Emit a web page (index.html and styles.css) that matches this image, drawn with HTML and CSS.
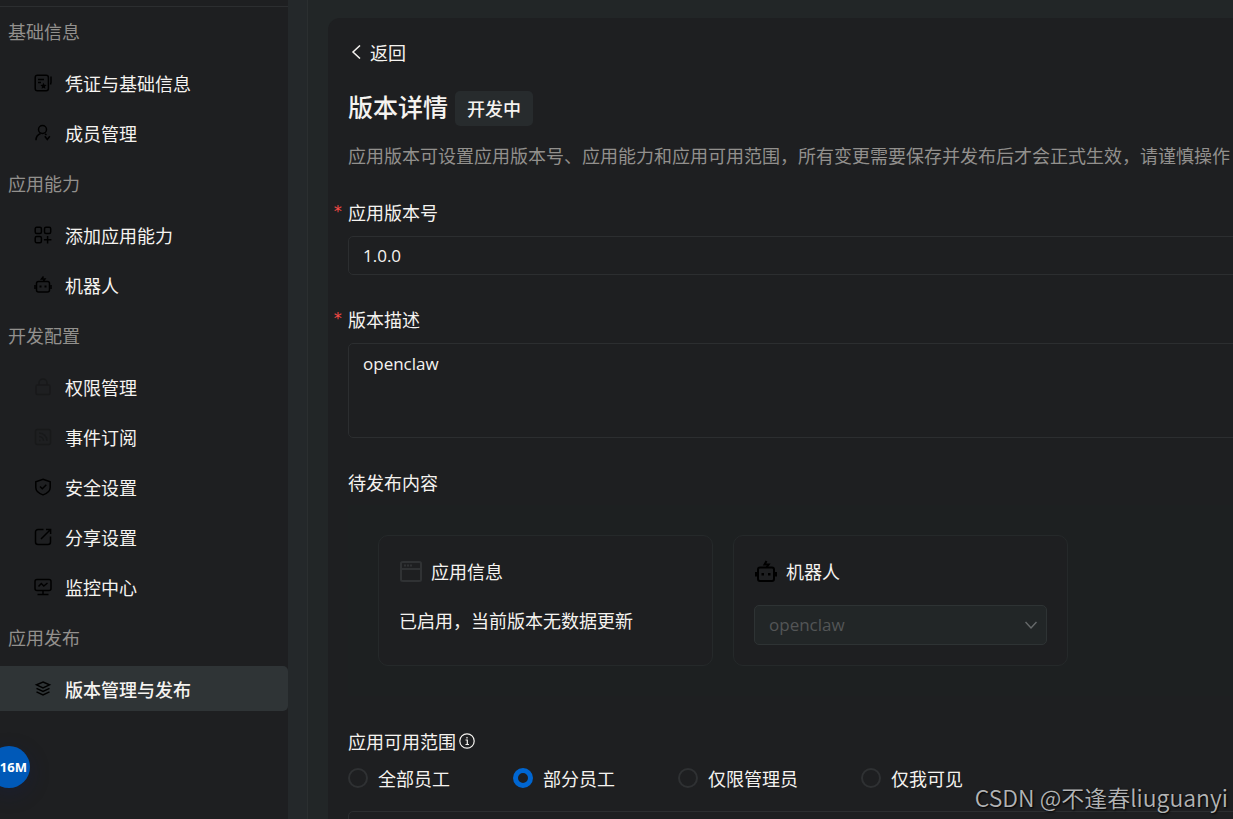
FILE: index.html
```html
<!DOCTYPE html>
<html lang="zh-CN">
<head>
    <meta charset="UTF-8">
    <meta name="viewport" content="width=device-width, initial-scale=1.0">
    <title>版本详情</title>
    <link rel="stylesheet" href="styles.css">
</head>
<body>
    <div class="layout">
        <nav class="sidebar">
            <h2 class="nav-title">基础信息</h2>
            <ul class="nav-list">
                <li><a class="nav-item" href="#">
                    <svg class="nav-icon" viewBox="0 0 18 18"><rect x="1.2" y="1.2" width="13.2" height="15.6" rx="2.2"/><path d="M4 5.500h6M4 8.500h3M17 2.500v6l-.5 2"/><path class="solid" d="M9.500 8.800l.9 2 2.200.3-1.600 1.500.4 2.200-1.900-1.100-1.900 1.100.4-2.200-1.600-1.500 2.200-.3z"/></svg>
                    凭证与基础信息
                </a></li>
                <li><a class="nav-item" href="#">
                    <svg class="nav-icon" viewBox="0 0 18 18"><circle cx="8.5" cy="5.5" r="4"/><path d="M2 16.2c0-3.4 1.8-5.700 4.600-6.700M11 9.800l1.500 1M10.800 12.300l2.500 3.200 2.500-3.200"/></svg>
                    成员管理
                </a></li>
            </ul>
            <h2 class="nav-title">应用能力</h2>
            <ul class="nav-list">
                <li><a class="nav-item" href="#">
                    <svg class="nav-icon" viewBox="0 0 18 18"><rect x="1.2" y="1.2" width="6.2" height="6.2" rx="1.5"/><rect x="10.5" y="1.2" width="6.2" height="6.2" rx="1.5"/><rect x="1.2" y="10.5" width="6.2" height="6.2" rx="1.5"/><path d="M13.6 10v7.5M9.9 13.700h7.500"/></svg>
                    添加应用能力
                </a></li>
                <li><a class="nav-item" href="#">
                    <svg class="nav-icon" viewBox="0 0 18 18"><rect x="2.5" y="5.5" width="13" height="10.5" rx="2"/><path d="M1 9v4M17 9v4M9.500 .5L7.500 3h3.500L9.500 5.200"/><path class="solid" d="M5.500 9.500h2v2h-2zM10.500 9.500h2v2h-2z"/></svg>
                    机器人
                </a></li>
            </ul>
            <h2 class="nav-title">开发配置</h2>
            <ul class="nav-list">
                <li><a class="nav-item" href="#">
                    <svg class="nav-icon dim" viewBox="0 0 18 18"><rect x="2" y="7" width="14" height="9.5" rx="1.5"/><path d="M5 7V5a4 4 0 0 1 8 0v2"/></svg>
                    权限管理
                </a></li>
                <li><a class="nav-item" href="#">
                    <svg class="nav-icon dim" viewBox="0 0 18 18"><rect x="1.5" y="1.5" width="15" height="15" rx="2"/><path d="M5 5a8 8 0 0 1 8 8M5 8.500a4.500 4.500 0 0 1 4.500 4.500M5 12.500h1.500"/></svg>
                    事件订阅
                </a></li>
                <li><a class="nav-item" href="#">
                    <svg class="nav-icon" viewBox="0 0 18 18"><path d="M9 1.300l7.200 2.500v5.700c0 3.400-3 5.900-7.200 7.400-4.200-1.500-7.200-4-7.200-7.400V3.800z"/><path d="M6 8.500l2.300 2.300 4-4"/></svg>
                    安全设置
                </a></li>
                <li><a class="nav-item" href="#">
                    <svg class="nav-icon" viewBox="0 0 18 18"><path d="M9.500 1.500H4A2.500 2.500 0 0 0 1.500 4v10A2.500 2.500 0 0 0 4 16.500h10a2.500 2.500 0 0 0 2.500-2.500V8.500M7 11l9.300-9.300M12 1.500h4.600v4.600"/></svg>
                    分享设置
                </a></li>
                <li><a class="nav-item" href="#">
                    <svg class="nav-icon" viewBox="0 0 18 18"><rect x="1" y="1.5" width="16" height="11" rx="2"/><path d="M4.500 8.500l2.800-3 2.500 2.500L13.500 5M9 12.500v4M3.500 16.500h11"/></svg>
                    监控中心
                </a></li>
            </ul>
            <h2 class="nav-title">应用发布</h2>
            <ul class="nav-list">
                <li><a class="nav-item active" href="#">
                    <svg class="nav-icon" viewBox="0 0 18 18"><path d="M9 2l6.500 2.800L9 8 2.500 4.800zM2.500 8.300L9 11.500l6.500-3.200M2.500 11.800L9 15l6.500-3.200"/></svg>
                    版本管理与发布
                </a></li>
            </ul>
        </nav>

        <div class="gutter"></div>

        <main class="content">
            <form class="panel">
                <a class="back" href="#">
                    <svg class="back-icon" viewBox="0 0 14 14"><path d="M12 0.500L5 7l7 6.500"/></svg>
                    返回
                </a>
                <div class="heading">
                    <h1>版本详情</h1>
                    <span class="tag">开发中</span>
                </div>
                <p class="intro">应用版本可设置应用版本号、应用能力和应用可用范围，所有变更需要保存并发布后才会正式生效，请谨慎操作</p>

                <div class="field">
                    <label class="required" for="version">应用版本号</label>
                    <input type="text" id="version" class="control" value="1.0.0" required>
                </div>
                <div class="field">
                    <label class="required" for="description">版本描述</label>
                    <textarea id="description" class="control" required>openclaw</textarea>
                </div>

                <h3>待发布内容</h3>
                <div class="cards">
                    <section class="card">
                        <div class="card-title">
                            <svg class="card-icon muted" viewBox="0 0 24 24"><rect x="2" y="3" width="20" height="19" rx="1.5"/><path d="M2 10h20M5 6.500h2M8 6.500h2M11 6.500h2"/></svg>
                            应用信息
                        </div>
                        <p class="card-text">已启用，当前版本无数据更新</p>
                    </section>
                    <section class="card">
                        <label class="card-title" for="robot">
                            <svg class="card-icon" viewBox="0 0 24 24"><rect x="4" y="8.500" width="16" height="13.500" rx="2"/><path d="M2 13v4.500M22 13v4.500M12.500 2L10.500 5.500h4.200L12.500 8.500"/><path class="solid" d="M7.500 14h2.500v2.500H7.500zM14 14h2.500v2.500H14z"/></svg>
                            机器人
                        </label>
                        <div class="select-wrap">
                            <select id="robot" class="control" disabled>
                                <option>openclaw</option>
                            </select>
                            <svg class="select-arrow" viewBox="0 0 12 12"><path d="M0.500 3l5.500 6 5.500-6"/></svg>
                        </div>
                    </section>
                </div>

                <fieldset class="scope">
                    <legend>
                        应用可用范围
                        <svg class="info-icon" viewBox="0 0 16 16"><circle cx="8" cy="8" r="7.2"/><path d="M6.500 7h1.800v4.500M6.500 11.500h3.500M8 4v1.500"/></svg>
                    </legend>
                    <div class="radios">
                        <label class="radio"><input type="radio" name="scope">全部员工</label>
                        <label class="radio"><input type="radio" name="scope" checked>部分员工</label>
                        <label class="radio"><input type="radio" name="scope">仅限管理员</label>
                        <label class="radio"><input type="radio" name="scope">仅我可见</label>
                    </div>
                </fieldset>
                <div class="members"></div>
            </form>
        </main>
    </div>

    <button type="button" class="memory-ball">16M</button>
    <div class="watermark">CSDN @不逢春liuguanyi</div>
</body>
</html>
```
FILE: styles.css
```css
:root {
    --bg: #222627;
    --surface: #1e1f21;
    --line: #2c2e30;
    --text: #f5f3f0;
    --muted: #92908d;
    --primary: #0066d1;
}

* {
    box-sizing: border-box;
}

body {
    margin: 0;
    height: 100vh;
    overflow: hidden;
    position: relative;
    background: var(--bg);
    color: var(--text);
    font-family: "Noto Sans CJK SC", sans-serif;
    font-size: 18px;
    line-height: 24px;
}

h1, h2, h3, p, ul, fieldset, legend {
    margin: 0;
    padding: 0;
    font-weight: 400;
    font-size: 18px;
}

a {
    color: inherit;
    text-decoration: none;
}

svg {
    flex: none;
    fill: none;
    stroke: currentColor;
    stroke-width: 1.5px;
}

.solid {
    fill: currentColor;
    stroke: none;
}

.layout {
    display: flex;
    height: 100%;
    padding-top: 6px;
    background: linear-gradient(var(--surface), var(--surface)) 0 0 / 288px 6px no-repeat;
}

.sidebar {
    flex: none;
    width: 288px;
    border-top: 1px solid var(--line);
    background: var(--surface);
}

.nav-title {
    padding-left: 8px;
    line-height: 48px;
    color: var(--muted);
}

.nav-list {
    display: grid;
    gap: 5px;
    margin: 5px 0 4px;
    list-style: none;
}

.nav-item {
    display: flex;
    align-items: center;
    gap: 13px;
    height: 45px;
    padding-left: 34px;
    border-radius: 0 5px 5px 0;
}

.nav-item.active {
    background: #2f3436;
    font-weight: 500;
}

.nav-icon {
    width: 18px;
    height: 18px;
    color: #000;
}

.nav-icon.dim {
    color: #18191a;
}

.gutter {
    flex: none;
    width: 20px;
    margin-top: -6px;
    border-right: 1px solid #2b2f30;
    background: #24282a;
}

.content {
    flex: 1;
    padding: 12px 0 0 20px;
}

.panel {
    min-width: 1000px;
    min-height: 100%;
    padding: 21px 20px 0;
    border-radius: 12px;
    background: var(--surface);
}

.back {
    display: inline-flex;
    align-items: center;
    gap: 8px;
}

.back-icon {
    width: 14px;
    height: 14px;
}

.heading {
    display: flex;
    align-items: flex-start;
    gap: 7px;
    margin-top: 27px;
}

h1 {
    font-size: 25px;
    font-weight: 500;
    line-height: 30px;
}

.tag {
    padding: 0 12px;
    border-radius: 5px;
    background: #272b2d;
    font-weight: 500;
    line-height: 35px;
}

.intro {
    margin: 17px 0 33px;
    color: var(--muted);
    white-space: nowrap;
}

.field {
    display: grid;
    gap: 12px;
    margin-bottom: 32px;
}

.required::before {
    content: "*";
    float: left;
    width: 15px;
    margin-left: -15px;
    color: #f54a45;
    font: 16px/24px "DejaVu Sans Mono", monospace;
}

.control {
    display: block;
    width: 100%;
    height: 39px;
    margin: 0;
    padding: 0 14px;
    border: 1px solid var(--line);
    border-radius: 5px;
    background: var(--surface);
    color: var(--text);
    font: 17px/24px "Open Sans", "Noto Sans CJK SC", sans-serif;
}

textarea.control {
    height: 95px;
    padding: 8px 14px;
    resize: none;
}

.cards {
    display: flex;
    gap: 20px;
    margin: 11px 0 33px;
    padding: 30px;
    background: #1d2021;
}

.card {
    width: 335px;
    padding: 23px 20px 20px;
    border: 1px solid #25292a;
    border-radius: 10px;
    background: var(--surface);
}

.card-title {
    display: flex;
    align-items: center;
    gap: 8px;
}

.card-icon {
    width: 24px;
    height: 24px;
    color: #000;
    stroke-width: 2px;
}

.card-icon.muted {
    color: #303234;
}

.card-text {
    margin-top: 22px;
    line-height: 30px;
}

.select-wrap {
    position: relative;
    margin-top: 22px;
}

select.control {
    height: 40px;
    appearance: none;
    border-color: #2e3334;
    background: #222627;
    color: #535556;
    opacity: 1;
}

.select-arrow {
    position: absolute;
    top: 14px;
    right: 10px;
    width: 12px;
    height: 12px;
    color: #66696a;
    pointer-events: none;
}

.scope {
    border: 0;
}

.scope legend {
    display: flex;
    align-items: center;
    gap: 3px;
}

.info-icon {
    width: 16px;
    height: 16px;
    stroke-width: 1.2px;
}

.radios {
    display: grid;
    grid-template-columns: 165px 165px 183px auto;
    margin: 13px 0 21px;
}

.radio {
    display: flex;
    align-items: center;
    gap: 10px;
}

.radio input {
    appearance: none;
    width: 20px;
    height: 20px;
    margin: 0;
    border: 2px solid #2f3133;
    border-radius: 50%;
}

.radio input:checked {
    border: 5px solid var(--primary);
}

.members {
    height: 60px;
    border: 1px solid var(--line);
    border-radius: 5px;
}

.memory-ball {
    position: absolute;
    left: -12px;
    bottom: 31px;
    width: 42px;
    height: 42px;
    padding: 0 3px 0 0;
    border: 0;
    border-radius: 50%;
    background: #0059b8;
    box-shadow: 0 6px 20px rgba(20, 30, 80, 0.3);
    color: #fff;
    font: 700 13px "Noto Sans", sans-serif;
    text-align: right;
}

.watermark {
    position: absolute;
    right: 5px;
    bottom: 7px;
    color: #b2b3b4;
    font-size: 23px;
    line-height: 30px;
    font-weight: 350;
    text-shadow: 1px 1px 2px #000;
}
```
